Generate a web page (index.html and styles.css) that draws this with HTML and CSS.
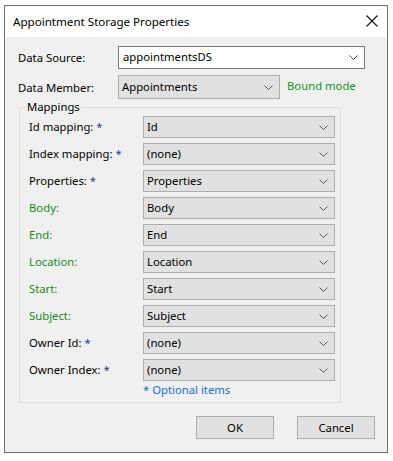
FILE: index.html
```html
<!DOCTYPE html>
<html lang="en">
<head>
    <meta charset="UTF-8">
    <meta name="viewport" content="width=device-width, initial-scale=1.0">
    <title>Appointment Storage Properties</title>
    <link rel="stylesheet" href="styles.css">
</head>
<body>
    <div class="dialog">
        <div class="title-bar">
            <span class="title">Appointment Storage Properties</span>
            <svg class="close" width="12" height="12" viewBox="0 0 12 12">
                <path d="M0.5 0.5 L11.5 11.5 M11.5 0.5 L0.5 11.5" stroke="#111" stroke-width="1.1" fill="none"/>
            </svg>
        </div>

        <div class="content">
            <div class="top-row">
                <span class="label">Data Source:</span>
                <div class="combo combo-edit source">
                    <span>appointmentsDS</span>
                    <svg class="chevron" width="9" height="5" viewBox="0 0 9 5"><path d="M0.5 0.5 L4.5 4.5 L8.5 0.5" stroke="#555" fill="none"/></svg>
                </div>
            </div>
            <div class="top-row">
                <span class="label">Data Member:</span>
                <div class="combo member">
                    <span>Appointments</span>
                    <svg class="chevron" width="9" height="5" viewBox="0 0 9 5"><path d="M0.5 0.5 L4.5 4.5 L8.5 0.5" stroke="#555" fill="none"/></svg>
                </div>
                <span class="bound">Bound mode</span>
            </div>

            <fieldset class="mappings">
                <legend>Mappings</legend>
                <div class="map-grid">
                    <span class="label">Id mapping: <b class="star">*</b></span>
                    <div class="combo"><span>Id</span><svg class="chevron" width="9" height="5" viewBox="0 0 9 5"><path d="M0.5 0.5 L4.5 4.5 L8.5 0.5" stroke="#555" fill="none"/></svg></div>

                    <span class="label">Index mapping: <b class="star">*</b></span>
                    <div class="combo"><span>(none)</span><svg class="chevron" width="9" height="5" viewBox="0 0 9 5"><path d="M0.5 0.5 L4.5 4.5 L8.5 0.5" stroke="#555" fill="none"/></svg></div>

                    <span class="label">Properties: <b class="star">*</b></span>
                    <div class="combo"><span>Properties</span><svg class="chevron" width="9" height="5" viewBox="0 0 9 5"><path d="M0.5 0.5 L4.5 4.5 L8.5 0.5" stroke="#555" fill="none"/></svg></div>

                    <span class="label bound-label">Body:</span>
                    <div class="combo"><span>Body</span><svg class="chevron" width="9" height="5" viewBox="0 0 9 5"><path d="M0.5 0.5 L4.5 4.5 L8.5 0.5" stroke="#555" fill="none"/></svg></div>

                    <span class="label bound-label">End:</span>
                    <div class="combo"><span>End</span><svg class="chevron" width="9" height="5" viewBox="0 0 9 5"><path d="M0.5 0.5 L4.5 4.5 L8.5 0.5" stroke="#555" fill="none"/></svg></div>

                    <span class="label bound-label">Location:</span>
                    <div class="combo"><span>Location</span><svg class="chevron" width="9" height="5" viewBox="0 0 9 5"><path d="M0.5 0.5 L4.5 4.5 L8.5 0.5" stroke="#555" fill="none"/></svg></div>

                    <span class="label bound-label">Start:</span>
                    <div class="combo"><span>Start</span><svg class="chevron" width="9" height="5" viewBox="0 0 9 5"><path d="M0.5 0.5 L4.5 4.5 L8.5 0.5" stroke="#555" fill="none"/></svg></div>

                    <span class="label bound-label">Subject:</span>
                    <div class="combo"><span>Subject</span><svg class="chevron" width="9" height="5" viewBox="0 0 9 5"><path d="M0.5 0.5 L4.5 4.5 L8.5 0.5" stroke="#555" fill="none"/></svg></div>

                    <span class="label">Owner Id: <b class="star">*</b></span>
                    <div class="combo"><span>(none)</span><svg class="chevron" width="9" height="5" viewBox="0 0 9 5"><path d="M0.5 0.5 L4.5 4.5 L8.5 0.5" stroke="#555" fill="none"/></svg></div>

                    <span class="label">Owner Index: <b class="star">*</b></span>
                    <div class="combo"><span>(none)</span><svg class="chevron" width="9" height="5" viewBox="0 0 9 5"><path d="M0.5 0.5 L4.5 4.5 L8.5 0.5" stroke="#555" fill="none"/></svg></div>
                </div>
                <p class="optional-note">* Optional items</p>
            </fieldset>

            <div class="buttons">
                <button class="btn">OK</button>
                <button class="btn">Cancel</button>
            </div>
        </div>
    </div>
</body>
</html>
```

FILE: styles.css
```css
* {
    box-sizing: border-box;
}
body {
    margin: 0;
    background-color: #fff;
    font-family: "Noto Sans", "Open Sans", sans-serif;
    font-size: 11.3px;
    color: #000;
}
.dialog {
    margin: 5px 0 0 4px;
    width: 384px;
    height: 448px;
    border: 1px solid #6e6e6e;
    background-color: #f0f0f0;
}
.title-bar {
    height: 31px;
    background-color: #fff;
    display: flex;
    align-items: center;
    justify-content: space-between;
    padding: 0 9px 0 8px;
}
.title {
    font-size: 11.6px;
    margin-top: -1px;
}
.close {
    display: block;
    margin-top: -1px;
}
.content {
    padding: 8px 0 0 13px;
}
.top-row {
    display: flex;
    align-items: center;
    height: 24px;
    margin-bottom: 6px;
}
.top-row .label {
    width: 100px;
}
.combo {
    display: flex;
    align-items: center;
    justify-content: space-between;
    height: 22px;
    padding: 0 6px 0 3px;
    background-color: #e1e1e1;
    border: 1px solid #adadad;
}
.combo span {
    margin-top: -1px;
}
.combo-edit {
    background-color: #fff;
    border-color: #7a7a7a;
    padding-left: 4px;
}
.source {
    width: 247px;
    height: 23px;
}
.member {
    width: 162px;
    height: 24px;
}
.bound {
    margin-left: 7px;
    color: #12941a;
    margin-top: -3px;
}
.mappings {
    margin: -5px 0 0 1px;
    width: 321px;
    padding: 2px 5px 5px 9px;
    border: 1px solid #dcdcdc;
}
.mappings legend {
    padding: 0 1px;
    margin-left: -3px;
    line-height: 14px;
}
.map-grid {
    display: grid;
    grid-template-columns: 114px 192px;
    grid-auto-rows: 22px;
    row-gap: 5px;
    align-items: center;
}
.map-grid .label {
    margin-top: -1px;
}
.bound-label {
    color: #1e8a1e;
}
.star {
    font-weight: normal;
    color: #1c3f8c;
}
.optional-note {
    margin: 1px 0 0 114px;
    color: #1a6fd0;
}
.buttons {
    display: flex;
    justify-content: flex-end;
    gap: 23px;
    padding-right: 12px;
    margin-top: 13px;
}
.btn {
    width: 78px;
    height: 23px;
    background-color: #e1e1e1;
    border: 1px solid #adadad;
    font-family: inherit;
    font-size: 11.3px;
    color: #000;
    padding: 0;
}
```
